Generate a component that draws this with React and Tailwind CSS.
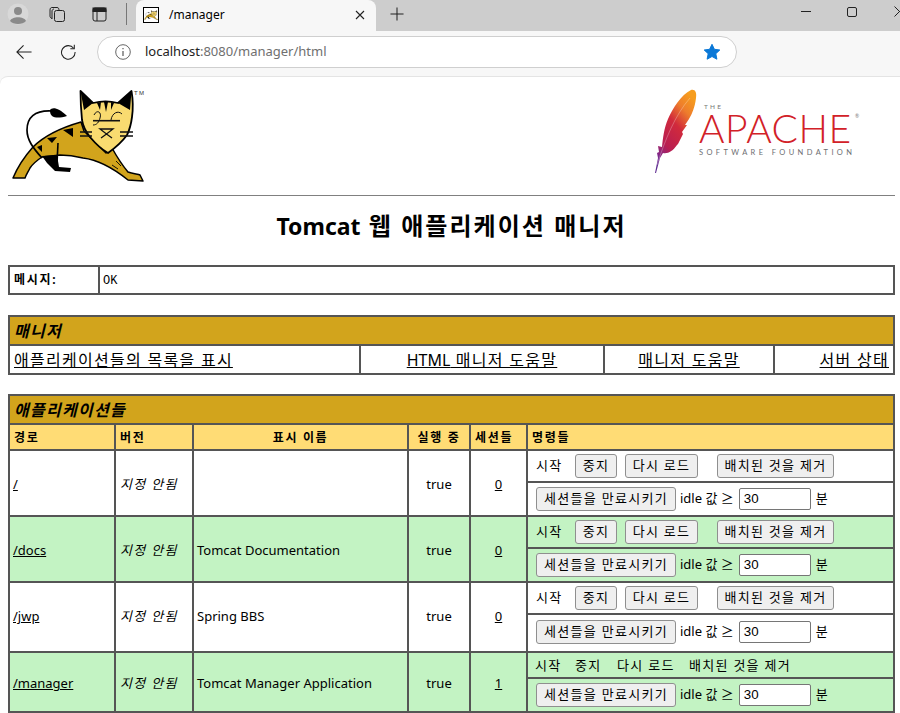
const FONT = '"Noto Sans","Noto Sans CJK KR",sans-serif';
const B = "border-2 border-[#555555]";

function Cat({ small }) {
  return (
    <g>
      <path d="M13 178 C18 166 25 156 33 147 C43 137 60 128 81 122 L84 131 L106 153 L112 148 C117 157 123 166 128 172 C133 174 138 174 140 175 L143 181 L128 180 C118 172 100 160 83 158 C75 156 67 155 60 155 L42 157 C36 161 32 165 30 168 C28 172 26 175 25 178 Z" fill="#D2A41C" stroke="#000" strokeWidth="1.5" strokeLinejoin="round" />
      <path d="M42 156 L57 155 L59 167 L71 168 L70 172 L55 171 L47 163 Z" fill="#000" />
      <path d="M58 143 L57 163" stroke="#000" strokeWidth="1.6" fill="none" />
      <path d="M63 130 L73 128 L73 137 Z M47 138 L57 137 L52 143 Z M37 147 L42 145 L42 152 Z" fill="#000" />
      <path d="M112 165 L118 169 M116 161 L121 166" stroke="#000" strokeWidth="0.9" />
      <path d="M42 158 C33 148 27 140 27 130 C27 118 34 110 52 111" fill="none" stroke="#000" strokeWidth="1.7" />
      <path d="M50 110 C52 107 58 107 67 116 C60 118 55 118 52 116 C50 114 50 112 50 110 Z" fill="#000" />
      <path d="M80.5 91 L93 103 C101 101 110 101 118 103 L131.5 91 C133 100 133 110 132 117 C131 125 129 131 127 135 C122 142 115 148 108 153 C101 149 95 143 90 137 C85 131 83 126 82 120 C81 110 80.5 100 80.5 91 Z" fill="#F9DB70" stroke="#000" strokeWidth="1.8" strokeLinejoin="round" />
      <path d="M80.5 91 L93 103 L84 110 Z M131.5 91 L118 103 L130 110 Z" fill="#000" />
      <path d="M104 102 L106 112 L108 102 Z M97 103 L100 110 L101 102 Z M114 103 L111 110 L111 102 Z" fill="#000" />
      <path d="M93 120.7 H120" stroke="#111" strokeWidth="1.6" />
      <path d="M80 132 H92 M80 136 H92 M120 132 H133 M120 136 H133" stroke="#111" strokeWidth="1.4" />
      <path d="M94 115 C97 109 102 112 100 118 C99 122 97 125 93 125 M111 120 C112 113 118 110 122 114" fill="none" stroke="#111" strokeWidth="1" />
      <path d="M100 129 H113 L106.5 134 Z M106.5 134 L101 138 M106.5 134 L112 138" fill="none" stroke="#111" strokeWidth="1.3" />
      {!small && <text x="134" y="95" fontSize="6" fill="#333" fontFamily="Liberation Sans">TM</text>}
    </g>
  );
}

function Feather() {
  return (
    <g>
      <defs>
        <linearGradient id="fg" x1="0.75" y1="0" x2="0.2" y2="1">
          <stop offset="0" stopColor="#F69D1E" />
          <stop offset="0.2" stopColor="#EE7D2C" />
          <stop offset="0.42" stopColor="#D12A3C" />
          <stop offset="0.72" stopColor="#B81E52" />
          <stop offset="0.9" stopColor="#7B2A8E" />
          <stop offset="1" stopColor="#5F2C91" />
        </linearGradient>
      </defs>
      <path d="M655 173 L658 158 L657 153 L659 152 L658 146 L662 147 C663 138 664 128 668 119 C673 108 681 95 691 90 C695 89 697 92 696 98 C695 107 692 114 689 119 L685 125 L687 125 L682 132 L683 134 L678 144 L677 145 C673 151 668 154 663 153 L660 158 L656 173 Z" fill="url(#fg)" />
      <path d="M657 165 C665 140 675 115 690 98" fill="none" stroke="#fff" strokeOpacity="0.45" strokeWidth="0.6" />
    </g>
  );
}

function Btn({ children, className = "" }) {
  return (
    <span className={"inline-flex h-6 items-center justify-center rounded-[3px] border border-[#8f8f8f] bg-[#efefef] text-[13px] text-black " + className}>
      {children}
    </span>
  );
}

function Expire() {
  return (
    <div className="flex items-center pl-[8px] text-[13px]">
      <Btn className="w-[140px]">세션들을 만료시키기</Btn>
      <span className="ml-1 tracking-normal">idle 값 ≥</span>
      <span className="ml-[5px] flex h-[22px] w-[72px] items-center rounded-[2px] border border-[#767676] bg-white pl-1 font-['Liberation_Sans'] text-[13.3px] tracking-normal">30</span>
      <span className="ml-[5px]">분</span>
    </div>
  );
}

function Start() {
  return (
    <div className="flex items-center pl-2 text-[13px]">
      <span className="w-[39px]">시작</span>
      <Btn className="w-[42px]">중지</Btn>
      <Btn className="ml-2 w-[73px]">다시 로드</Btn>
      <Btn className="ml-[19px] w-[117px]">배치된 것을 제거</Btn>
    </div>
  );
}

function Plain() {
  return (
    <div className="flex items-center pl-[7px] pt-[2px] text-[13px]">
      <span className="w-[40px]">시작</span>
      <span className="w-[42px]">중지</span>
      <span className="w-[72px]">다시 로드</span>
      <span>배치된 것을 제거</span>
    </div>
  );
}

function AppRow({ path, name, sessions, bg, plain, h1, h2, tall }) {
  const c = `${B} ${bg} text-[13px] ${tall ? "" : "pt-[4px]"}`;
  return (
    <>
      <tr className={h1}>
        <td rowSpan={2} className={c + " px-[3px] text-[12.8px] tracking-normal"}><a className="underline">{path}</a></td>
        <td rowSpan={2} className={c + " px-1 italic"}>지정 안됨</td>
        <td rowSpan={2} className={c + " px-[3px] text-[12.8px] tracking-normal"}>{name}</td>
        <td rowSpan={2} className={c + " px-1 text-center tracking-normal"}>true</td>
        <td rowSpan={2} className={c + " px-1 text-center tracking-normal"}><a className="underline">{sessions}</a></td>
        <td className={`${B} ${bg} p-0`}>{plain ? <Plain /> : <Start />}</td>
      </tr>
      <tr className={h2}>
        <td className={`${B} ${bg} p-0 ${tall ? "pt-[5px] align-top" : ""}`}><Expire /></td>
      </tr>
    </>
  );
}

export default function App() {
  return (
    <div className="relative h-[713px] w-[900px] overflow-hidden bg-[#f7f7f7] tracking-[0.08em] text-black" style={{ fontFamily: FONT }}>
      {/* tab strip */}
      <div className="flex h-[31px] w-[920px] items-start bg-[#cdcdcd] tracking-normal">
        <svg className="ml-[7px] mt-[3px] h-[22px] w-[22px] shrink-0" viewBox="0 0 22 22">
          <circle cx="11" cy="11" r="10.5" fill="#d8d8d8" />
          <circle cx="11" cy="8" r="4" fill="#8a8a8a" />
          <path d="M3 18 C5 13 17 13 19 18 C16 22 6 22 3 18 Z" fill="#8a8a8a" />
        </svg>
        <svg className="ml-[20px] mt-[6px] h-4 w-4 shrink-0" viewBox="0 0 16 16" fill="none" stroke="#222" strokeWidth="1">
          <rect x="5.5" y="4.5" width="10" height="11" rx="2" />
          <path d="M3 12.5 C1.5 12 1 11 1 10 L1 4 C1 2 2 1.5 3 1.5 L8 1.5 C9.5 1.5 10 2.5 10 4.5 M3 13 L3 5 C3 4 4 3 5 3" />
        </svg>
        <svg className="ml-[27px] mt-[7px] h-[15px] w-[15px] shrink-0" viewBox="0 0 15 15" fill="none" stroke="#222" strokeWidth="1">
          <rect x="1" y="1" width="13" height="13" rx="2" />
          <path d="M1 4.5 H14 M5 4.5 V14" />
          <rect x="1" y="1" width="13" height="3.5" fill="#222" />
        </svg>
        <div className="ml-[19px] mt-[3px] h-[22px] w-px shrink-0 bg-[#777]" />
        <div className="ml-[9px] flex h-[31px] w-[240px] shrink-0 items-center rounded-t-lg bg-[#f7f7f7] pb-[2px] pl-[7px]">
          <span className="flex h-4 w-4 items-center justify-center overflow-hidden border border-black bg-white">
            <svg className="h-[14px] w-[14px]" viewBox="10 88 135 95"><Cat small /></svg>
          </span>
          <span className="ml-[10px] text-xs">/manager</span>
          <svg className="ml-auto mr-[11px] h-[10px] w-[10px]" viewBox="0 0 10 10" stroke="#222" strokeWidth="1.1"><path d="M1 1 L9 9 M9 1 L1 9" /></svg>
        </div>
        <svg className="ml-[14px] mt-[7px] h-[14px] w-[14px] shrink-0" viewBox="0 0 15 15" stroke="#222" strokeWidth="1.1"><path d="M7.5 0.5 V14.5 M0.5 7.5 H14.5" /></svg>
        <div className="ml-[397px] mt-[6px] flex shrink-0 items-center">
          <div className="h-px w-[10px] bg-[#222]" />
          <div className="ml-[36px] h-[10px] w-[10px] rounded-[2px] border border-[#222]" />
          <svg className="ml-[37px] h-[11px] w-[11px] shrink-0" viewBox="0 0 11 11" stroke="#222" strokeWidth="1"><path d="M0.5 0.5 L10.5 10.5 M10.5 0.5 L0.5 10.5" /></svg>
        </div>
      </div>
      {/* toolbar */}
      <div className="flex h-[45px] items-center bg-[#f7f7f7] pb-[8px] pt-[4px] tracking-normal">
        <svg className="ml-4 h-[16px] w-[16px]" viewBox="0 0 18 17" fill="none" stroke="#222" strokeWidth="1.2"><path d="M1 8.5 H17.5 M8.5 1 L1 8.5 L8.5 16" /></svg>
        <svg className="ml-[28px] h-[16px] w-[16px]" viewBox="0 0 17 17" fill="none" stroke="#222" strokeWidth="1.1">
          <path d="M14.5 4.5 A7.2 7.2 0 1 0 16 8.5" />
          <path d="M15.2 0.8 V5 H11" />
        </svg>
        <div className="ml-[21px] flex h-8 w-[640px] items-center rounded-full border border-[#cfcfcf] bg-white">
          <svg className="ml-[17px] h-4 w-4" viewBox="0 0 16 16" fill="none" stroke="#666" strokeWidth="1">
            <circle cx="8" cy="8" r="7.3" />
            <path d="M8 7 V12 M8 4 V5.3" strokeWidth="1.3" />
          </svg>
          <span className="ml-[14px] text-[13px] text-[#222]">localhost<span className="text-[#6f6f6f]">:8080/manager/html</span></span>
          <svg className="ml-auto mr-4 h-4 w-4" viewBox="0 0 16 16"><path d="M8 0.3 L10.4 5.3 L15.8 6 L11.8 9.7 L12.9 15.2 L8 12.5 L3.1 15.2 L4.2 9.7 L0.2 6 L5.6 5.3 Z" fill="#0a78d7" stroke="#0a78d7" strokeLinejoin="round" /></svg>
        </div>
      </div>
      {/* page */}
      <div className="h-[637px] rounded-tl-lg border-t border-[#e4e4e4] bg-white px-2">
        <div className="flex h-[118px] items-start justify-between">
          <svg className="mt-[10px] h-[100px] w-[145px]" viewBox="8 87 145 100"><Cat /></svg>
          <svg className="mr-[32px] mt-[10px] h-[90px] w-[210px]" viewBox="650 87 210 90">
            <Feather />
            <text x="704" y="109" fontSize="6.5" fill="#777" fontFamily="Lato" textLength="17" letterSpacing="0">THE</text>
            <text x="699" y="143" fontSize="39" fill="#D22128" fontFamily="Lato" fontWeight="300" textLength="152" letterSpacing="0">APACHE</text>
            <text x="855" y="118" fontSize="5" fill="#777" fontFamily="Lato" letterSpacing="0">®</text>
            <text x="699" y="155" fontSize="7.5" fill="#6d6e71" fontFamily="Lato" textLength="153" letterSpacing="0">SOFTWARE FOUNDATION</text>
          </svg>
        </div>
        <div className="h-px w-[887px] bg-[#808080]" />
        <h1 className="mt-[11px] h-[38px] w-[887px] text-center text-[24px] font-bold leading-[38px] tracking-[0.085em]"><span className="text-[23px] tracking-normal">Tomcat</span> 웹 애플리케이션 매니저</h1>

        <table className="mt-5 w-[887px] table-fixed border-collapse">
          <colgroup><col className="w-[90px]" /><col /></colgroup>
          <tbody>
            <tr className="h-[28px]">
              <td className={`${B} px-1 text-xs font-bold tracking-[0.14em]`}>메시지:</td>
              <td className={`${B} px-[3px] pt-[1px] font-['Liberation_Mono'] text-xs tracking-normal`}>OK</td>
            </tr>
          </tbody>
        </table>

        <table className="mt-5 w-[887px] table-fixed border-collapse">
          <colgroup><col className="w-[351px]" /><col className="w-[244px]" /><col className="w-[170px]" /><col /></colgroup>
          <tbody>
            <tr className="h-[29px]">
              <td colSpan={4} className={`${B} bg-[#D2A41C] px-1 text-base font-bold italic`}>매니저</td>
            </tr>
            <tr className="h-[29px] text-base">
              <td className={`${B} px-1`}><a className="underline">애플리케이션들의 목록을 표시</a></td>
              <td className={`${B} px-1 text-center`}><a className="underline"><span className="tracking-normal">HTML</span> 매니저 도움말</a></td>
              <td className={`${B} px-1 text-center`}><a className="underline">매니저 도움말</a></td>
              <td className={`${B} px-1 text-right`}><a className="underline">서버 상태</a></td>
            </tr>
          </tbody>
        </table>

        <table className="mt-[19px] w-[887px] table-fixed border-collapse">
          <colgroup>
            <col className="w-[106px]" /><col className="w-[78px]" /><col className="w-[215px]" /><col className="w-[62px]" /><col className="w-[57px]" /><col />
          </colgroup>
          <tbody>
            <tr className="h-[29px]">
              <td colSpan={6} className={`${B} bg-[#D2A41C] px-1 text-base font-bold italic`}>애플리케이션들</td>
            </tr>
            <tr className="h-[26px] bg-[#FFDC75] text-xs font-bold tracking-[0.14em]">
              <td className={`${B} px-1 pt-[2px]`}>경로</td>
              <td className={`${B} px-1 pt-[2px]`}>버전</td>
              <td className={`${B} px-1 pt-[2px] text-center`}>표시 이름</td>
              <td className={`${B} px-1 pt-[2px] text-center`}>실행 중</td>
              <td className={`${B} px-1 pt-[2px]`}>세션들</td>
              <td className={`${B} px-1 pt-[2px]`}>명령들</td>
            </tr>
            <AppRow path="/" name="" sessions="0" bg="bg-white" h1="h-[32px]" h2="h-[34px]" />
            <AppRow path="/docs" name="Tomcat Documentation" sessions="0" bg="bg-[#C3F3C3]" h1="h-[32px]" h2="h-[34px]" />
            <AppRow path="/jwp" name="Spring BBS" sessions="0" bg="bg-white" h1="h-[32px]" h2="h-[38px]" tall />
            <AppRow path="/manager" name="Tomcat Manager Application" sessions="1" bg="bg-[#C3F3C3]" h1="h-[26px]" h2="h-[34px]" plain />
          </tbody>
        </table>
      </div>
    </div>
  );
}
